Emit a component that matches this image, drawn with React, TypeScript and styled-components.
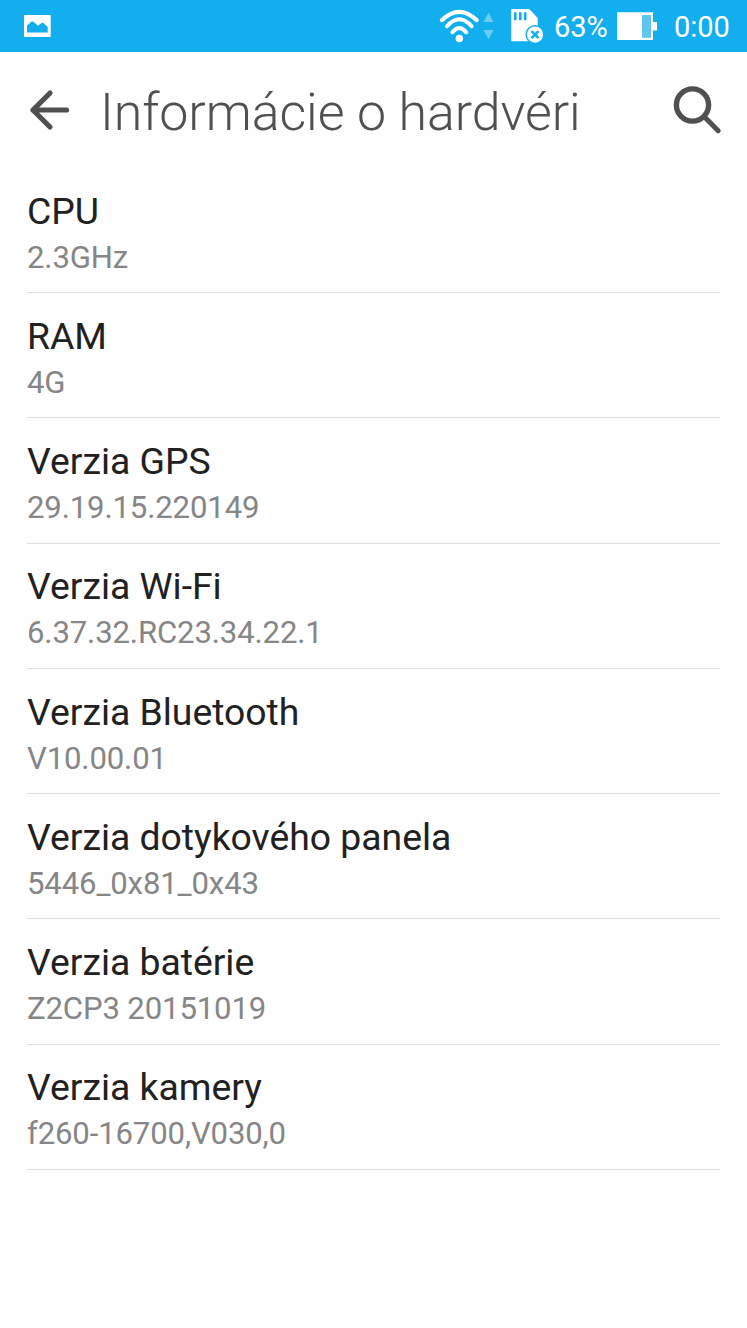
import React from "react";
import styled, { createGlobalStyle } from "styled-components";

const GlobalStyle = createGlobalStyle`
  html, body { margin: 0; background: #fefefe; }
  body { font-family: Roboto, "Noto Sans", sans-serif; overflow: hidden; }
`;

const Screen = styled.div`
  display: flex;
  flex-direction: column;
  width: 747px;
  height: 1328px;
  background: #fefefe;
`;

const StatusBar = styled.header`
  display: flex;
  align-items: center;
  box-sizing: border-box;
  height: 52px;
  padding: 0 17px 0 24px;
  background: #12aeee;
  color: #fff;
`;

const Icon = styled.svg`
  display: block;
  flex: none;
  overflow: visible;
`;

const StatusIcons = styled.div`
  display: flex;
  align-items: center;
  margin-left: auto;
`;

const IconSlot = styled.div<{ $gap: number }>`
  margin-left: ${(p) => p.$gap}px;
`;

const StatusText = styled.span<{ $width: number; $gap: number }>`
  width: ${(p) => p.$width}px;
  margin-left: ${(p) => p.$gap}px;
  padding-top: 2px;
  font-size: 29px;
  line-height: 34px;
  white-space: nowrap;
`;

const AppBar = styled.div`
  display: flex;
  align-items: center;
  height: 116px;
  padding: 0 26px 0 30px;
  color: #505050;
`;

const Heading = styled.h1`
  flex: 1;
  margin: 5px 0 0 30px;
  font-size: 51.9px;
  font-weight: 300;
  letter-spacing: -0.08px;
  line-height: 62px;
  white-space: nowrap;
`;

const List = styled.ul`
  margin: 0;
  padding: 0 27px;
  list-style: none;
`;

const Row = styled.li`
  box-sizing: border-box;
  height: 125.22px;
  padding-top: 20.8px;
  border-bottom: 1px solid #dfdfdf;
`;

const RowTitle = styled.div`
  color: #212121;
  font-size: 37.35px;
  letter-spacing: -0.01px;
  line-height: 44px;
`;

const RowValue = styled.div`
  color: #868686;
  font-size: 31.1px;
  letter-spacing: -0.13px;
  line-height: 49px;
`;

const items = [
  ["CPU", "2.3GHz"],
  ["RAM", "4G"],
  ["Verzia GPS", "29.19.15.220149"],
  ["Verzia Wi-Fi", "6.37.32.RC23.34.22.1"],
  ["Verzia Bluetooth", "V10.00.01"],
  ["Verzia dotykového panela", "5446_0x81_0x43"],
  ["Verzia batérie", "Z2CP3 20151019"],
  ["Verzia kamery", "f260-16700,V030,0"],
];

const PictureIcon = () => (
  <Icon width="27" height="52" viewBox="0 0 27 52">
    <rect x="0" y="15" width="26.7" height="22" rx="0.8" fill="#fff" />
    <path d="M3 32.5V25.5L7.5 21.4H9L14 25.8L18 22.8H19.3L23.7 27V32.5Z" fill="#12aeee" />
  </Icon>
);

const WifiIcon = () => (
  <Icon width="54" height="52" viewBox="440 0 54 52">
    <g fill="none" stroke="#fff" strokeWidth="4" strokeLinecap="round">
      <path d="M441.8 20.2Q459.3 3.4 476.8 20.2" />
      <path d="M447 26.3Q459.3 12.3 471.6 26.3" />
      <path d="M452.4 32.2Q459.3 23.6 466.2 32.2" />
    </g>
    <circle cx="459.3" cy="38.5" r="3.7" fill="#fff" />
    <path d="M483.5 22L488.5 12.8L493.5 22ZM483.5 30L488.5 39.2L493.5 30Z" fill="#6bcdf4" />
  </Icon>
);

const SdCardIcon = () => (
  <Icon width="33" height="52" viewBox="511 0 33 52">
    <path d="M511.3 9H529.2L537.7 18V41.3H511.3Z" fill="#fff" />
    <path d="M514 12.3h2.6v8h-2.6zM519 12.3h2.6v8h-2.6zM523.9 12.3h2.6v8h-2.6z" fill="#12aeee" />
    <circle cx="535" cy="34.6" r="9.6" fill="#12aeee" />
    <circle cx="535" cy="34.6" r="8.1" fill="#fff" />
    <path d="M531.5 31.1L538.5 38.1M538.5 31.1L531.5 38.1" stroke="#12aeee" strokeWidth="2.5" />
  </Icon>
);

const BatteryIcon = () => (
  <Icon width="40" height="52" viewBox="617 0 40 52">
    <path d="M617.2 12.2H653V22H657V30.4H653V40H617.2Z" fill="#fff" />
    <path d="M642 15h9v22.8h-9z" fill="#60c6f1" />
  </Icon>
);

const BackIcon = () => (
  <Icon width="40" height="40" viewBox="30 90 40 40">
    <path
      d="M50 93L33 110L50 127M33 110H66.5"
      fill="none"
      stroke="#505050"
      strokeWidth="5.2"
      strokeLinecap="round"
      strokeLinejoin="round"
    />
  </Icon>
);

const SearchIcon = () => (
  <Icon width="48" height="48" viewBox="673 86 48 48">
    <g fill="none" stroke="#505050" strokeLinecap="round">
      <circle cx="692.5" cy="105" r="16.1" strokeWidth="5.4" />
      <path d="M704.8 117.3L718.2 130.7" strokeWidth="5" />
    </g>
  </Icon>
);

export default function App() {
  return (
    <>
      <GlobalStyle />
      <Screen>
        <StatusBar>
          <PictureIcon />
          <StatusIcons>
            <WifiIcon />
            <IconSlot $gap={17}>
              <SdCardIcon />
            </IconSlot>
            <StatusText $width={53} $gap={10}>63%</StatusText>
            <IconSlot $gap={10}>
              <BatteryIcon />
            </IconSlot>
            <StatusText $width={56} $gap={17}>0:00</StatusText>
          </StatusIcons>
        </StatusBar>
        <AppBar>
          <BackIcon />
          <Heading>Informácie o hardvéri</Heading>
          <SearchIcon />
        </AppBar>
        <List>
          {items.map(([title, value]) => (
            <Row key={title}>
              <RowTitle>{title}</RowTitle>
              <RowValue>{value}</RowValue>
            </Row>
          ))}
        </List>
      </Screen>
    </>
  );
}
